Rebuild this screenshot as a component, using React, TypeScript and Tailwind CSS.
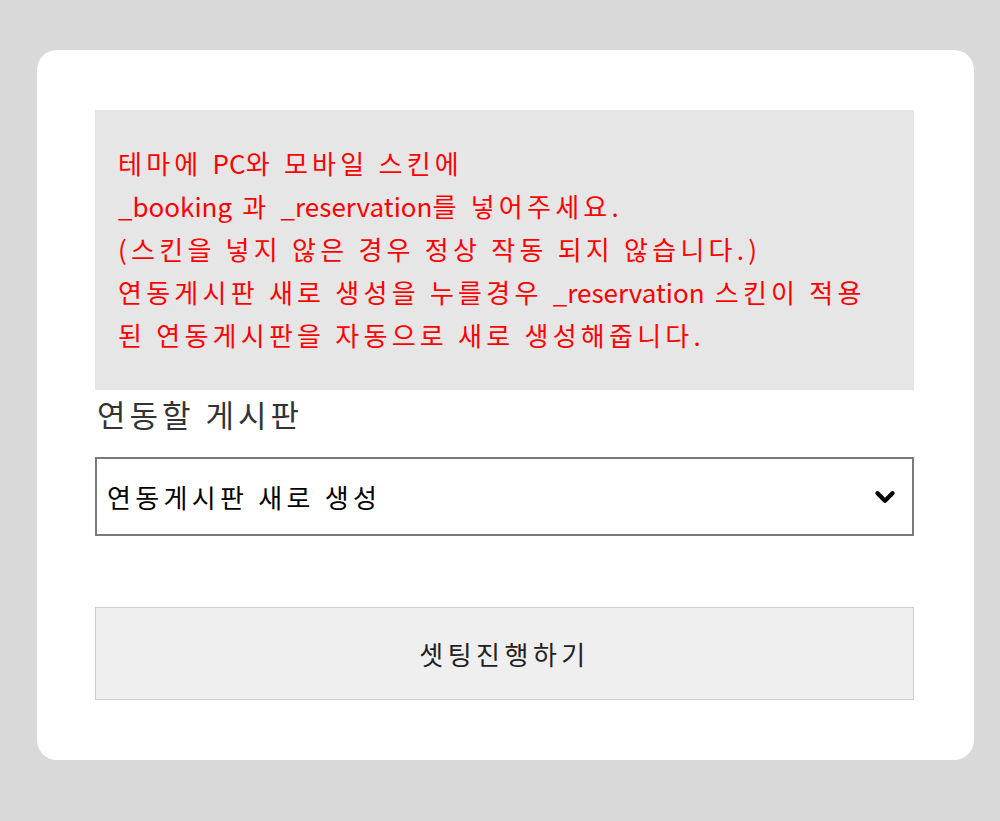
import { ChevronDown } from "lucide-react";

const FONT = { fontFamily: '"Noto Sans CJK KR", "Noto Sans", sans-serif' };

const notice = [
  "테마에 PC와 모바일 스킨에",
  "_booking 과 _reservation를 넣어주세요.",
  "(스킨을 넣지 않은 경우 정상 작동 되지 않습니다.)",
  "연동게시판 새로 생성을 누를경우 _reservation 스킨이 적용",
  "된 연동게시판을 자동으로 새로 생성해줍니다.",
];

// latin words are set tighter than the hangul around them
function Line({ text }: { text: string }) {
  const parts = text.split(/([A-Za-z_]+)/);
  return (
    <p className="whitespace-nowrap text-[26px] leading-[43px] text-[#ff0000] tracking-[4.25px]">
      {parts.map((p, i) =>
        /^[A-Za-z_]+$/.test(p) ? (
          <span key={i} className="tracking-[0px]">
            {p}
          </span>
        ) : (
          p
        )
      )}
    </p>
  );
}

export default function App() {
  return (
    <div className="min-h-[821px] w-full bg-[#d9d9d9] pl-[37px] pr-[26px] pt-[50px] pb-[60px]" style={FONT}>
      <div className="rounded-[20px] bg-white pl-[58px] pr-[60px] pt-[60px] pb-[60px]">
        <div className="h-[280px] bg-[#e6e6e6] px-[23px] pt-[31px]">
          {notice.map((line) => (
            <Line key={line} text={line} />
          ))}
        </div>

        <div className="pl-[2px] pt-[6px] text-[31px] leading-[36px] text-[#333] tracking-[4px]">연동할 게시판</div>

        <div className="mt-[25px] flex h-[79px] items-center justify-between border-2 border-[#7a7a7a] pl-[10px] pr-[12px]">
          <span className="text-[26px] text-black tracking-[4.3px]">연동게시판 새로 생성</span>
          <ChevronDown size={30} strokeWidth={3.5} className="text-black" />
        </div>

        <button
          type="button"
          className="mt-[71px] flex h-[93px] w-full items-center justify-center border border-[#cfcfcf] bg-[#efefef] text-[26px] text-[#222] tracking-[4.5px]"
        >
          셋팅진행하기
        </button>
      </div>
    </div>
  );
}
